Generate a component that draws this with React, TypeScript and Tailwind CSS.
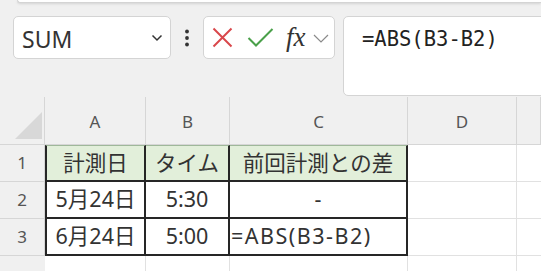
import React from "react";

const cellFont = { fontFamily: '"Noto Sans", "Noto Sans CJK JP", sans-serif' };

const rows = [
  { n: "1", a: "計測日", b: "タイム", c: "前回計測との差", head: true },
  { n: "2", a: "5月24日", b: "5:30", c: "-" },
  { n: "3", a: "6月24日", b: "5:00", c: "=ABS(B3-B2)", left: true },
];

function Toolbar() {
  return (
    <div className="flex items-start pl-[13px] mt-[13px]">
      <div className="w-[158px] h-[43px] bg-white border border-[#d4d4d4] rounded-[5px] flex items-center pl-[8px] pr-[6px]">
        <span
          className="flex-1 text-[23px] text-[#333] pt-[3px] leading-none"
          style={{ fontFamily: '"Noto Sans", sans-serif' }}
        >
          SUM
        </span>
        <svg width="12" height="8" viewBox="0 0 12 8" className="mr-[1px]">
          <path d="M1.5 1.5 L6 6 L10.5 1.5" fill="none" stroke="#333" strokeWidth="1.5" />
        </svg>
      </div>
      <div className="w-[32px] h-[43px] flex items-center justify-center">
        <svg width="6" height="18" viewBox="0 0 6 18">
          <circle cx="3" cy="2.5" r="1.9" fill="#333" />
          <circle cx="3" cy="9" r="1.9" fill="#333" />
          <circle cx="3" cy="15.5" r="1.9" fill="#333" />
        </svg>
      </div>
      <div className="w-[132px] h-[43px] bg-white border border-[#d4d4d4] rounded-[5px] flex items-center pl-[8px]">
        <svg width="21" height="21" viewBox="0 0 21 21">
          <path d="M1.5 1.5 L19.5 19.5 M19.5 1.5 L1.5 19.5" fill="none" stroke="#d9474b" strokeWidth="2" />
        </svg>
        <svg width="27" height="21" viewBox="0 0 27 21" className="ml-[14px]">
          <path d="M1.5 11 L9 18.5 L25.5 2" fill="none" stroke="#4aa04a" strokeWidth="2" />
        </svg>
        <span
          className="ml-[12px] text-[27px] italic text-[#333] leading-none"
          style={{ fontFamily: '"Liberation Serif", serif' }}
        >
          fx
        </span>
        <svg width="16" height="9" viewBox="0 0 16 9" className="ml-[7px] mt-[2px]">
          <path d="M1 1 L8 8 L15 1" fill="none" stroke="#8a8a8a" strokeWidth="1.2" />
        </svg>
      </div>
      <div className="ml-[8px] mr-[-6px] flex-1 h-[80px] bg-white border border-[#d4d4d4] rounded-[5px] pl-[18px] pt-[9px]">
        <span
          className="text-[20.5px] text-[#222] leading-[26px]"
          style={{ fontFamily: '"DejaVu Sans Mono", monospace' }}
        >
          =ABS(B3-B2)
        </span>
      </div>
    </div>
  );
}

function Sheet() {
  const cols = ["A", "B", "C", "D", ""];
  return (
    <div
      className="grid mt-[1px] grid-cols-[45px_101px_84px_178px_109px_1fr] grid-rows-[48px_37px_37px_37px_37px]"
      style={cellFont}
    >
      <div className="border-b border-r border-[#d6d6d6] relative">
        <svg width="28" height="28" viewBox="0 0 28 28" className="absolute left-[15px] top-[15px]">
          <polygon points="27,0 27,27 0,27" fill="#d8d8d8" />
        </svg>
      </div>
      {cols.map((c, i) => (
        <div
          key={i}
          className="border-b border-r border-[#d6d6d6] flex items-center justify-center text-[17px] text-[#555] pt-[3px]"
          style={{ fontFamily: '"Noto Sans", sans-serif' }}
        >
          {c}
        </div>
      ))}
      {rows.map((r) => (
        <React.Fragment key={r.n}>
          <div
            className="border-b border-r border-[#d6d6d6] flex items-center justify-center text-[17px] text-[#555]"
            style={{ fontFamily: '"Noto Sans", sans-serif' }}
          >
            {r.n}
          </div>
          {[r.a, r.b, r.c].map((v, i) => (
            <div
              key={i}
              className={
                "border-b-2 border-r-2 border-[#262626] flex items-center text-[21.5px] text-[#333] " +
                (i === 0 ? "border-l-2 " : "") +
                (r.head ? "bg-[#e2efda] border-t border-t-[#9fb89a] " : "bg-white ") +
                (r.left && i === 2 ? "justify-start pl-[1px] tracking-[1.5px]" : "justify-center")
              }
            >
              {v}
            </div>
          ))}
          <div className="bg-white border-b border-r border-[#e1e1e1]" />
          <div className="bg-white border-b border-[#e1e1e1]" />
        </React.Fragment>
      ))}
      <div
        className="flex items-start justify-center text-[17px] text-[#555] pt-[10px]"
        style={{ fontFamily: '"Noto Sans", sans-serif' }}
      >
        4
      </div>
      <div className="bg-white border-r border-[#e1e1e1]" />
      <div className="bg-white border-r border-[#e1e1e1]" />
      <div className="bg-white border-r border-[#e1e1e1]" />
      <div className="bg-white border-r border-[#e1e1e1]" />
      <div className="bg-white" />
    </div>
  );
}

export default function App() {
  return (
    <div className="w-[541px] h-[271px] bg-[#f0f0f0] overflow-hidden">
      <div className="ml-[17px] h-[3px] bg-white border-b border-l border-[#d4d4d4] rounded-bl-[4px] shadow-sm" />
      <Toolbar />
      <Sheet />
    </div>
  );
}
